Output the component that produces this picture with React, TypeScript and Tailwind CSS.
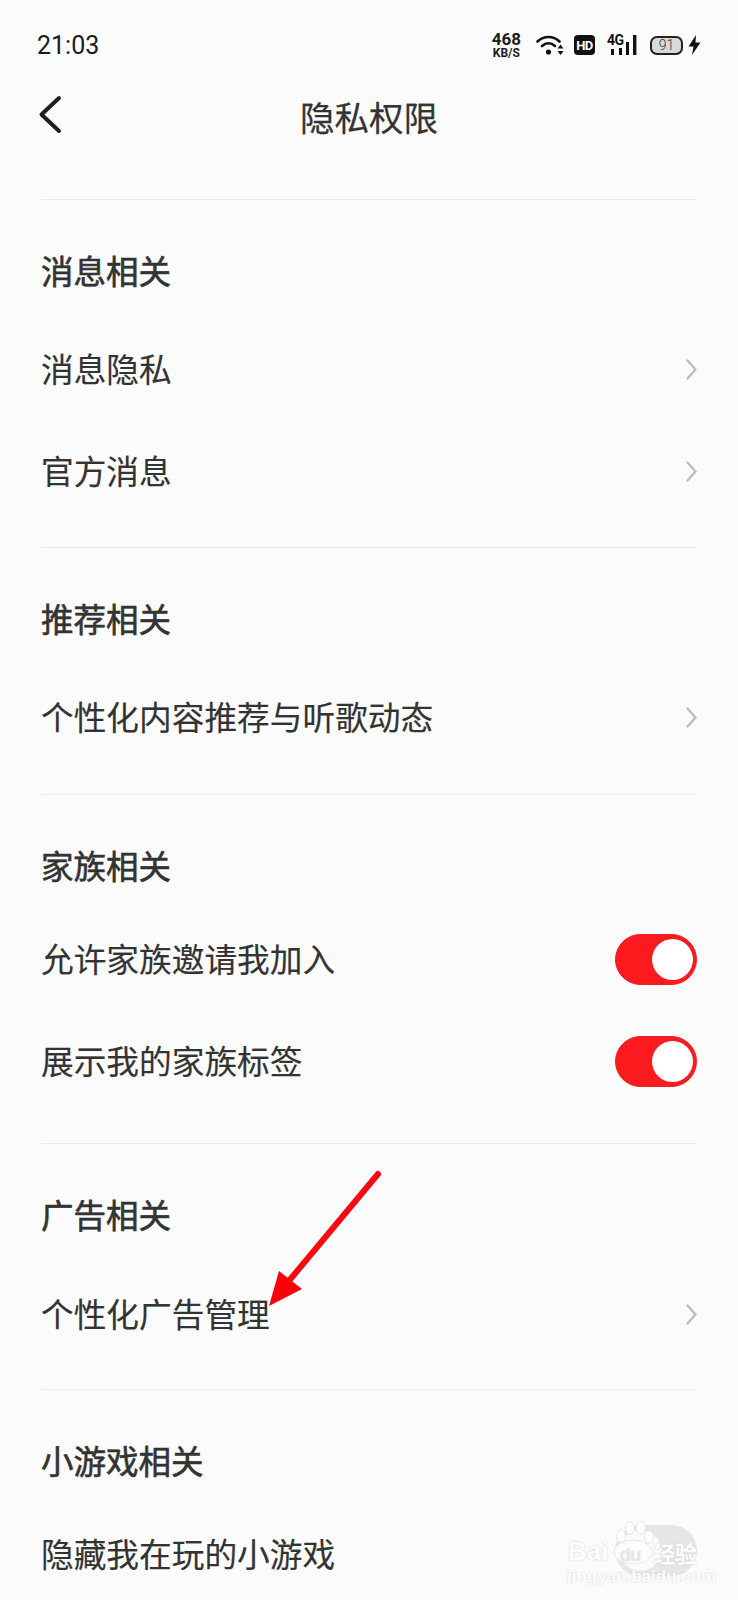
const cjk = "font-['Noto_Sans_CJK_SC','Noto_Sans',sans-serif]";

const Chevron = () => (
  <svg width="11" height="21" viewBox="0 0 11 21" fill="none">
    <path d="M1.5 1.5 L9.5 10.5 L1.5 19.5" stroke="#bdbdbd" strokeWidth="2.4" strokeLinecap="round" strokeLinejoin="round" />
  </svg>
);

const Toggle = ({ off }: { off?: boolean }) =>
  off ? (
    <div className="mb-[3px] flex h-[51px] w-[82px] items-center justify-start rounded-full bg-[#e6e6e6] pl-[5px]">
      <div className="h-[41px] w-[41px] rounded-full bg-[#fbfbfb]" />
    </div>
  ) : (
    <div className="flex h-[51px] w-[82px] items-center justify-end rounded-full border-[1.5px] border-[#e8211f] bg-[#fb1b1f] pr-[3.5px]">
      <div className="h-[41px] w-[41px] rounded-full bg-white" />
    </div>
  );

const Row = ({ label, toggle, off }: { label: string; toggle?: boolean; off?: boolean }) => (
  <div className="flex h-[102px] items-center justify-between">
    <p className={`${off ? "pt-[1px]" : "pb-[3px]"} text-[32.7px] leading-[40px] text-[#333333] [-webkit-text-stroke:0.15px_#333333]`}>{label}</p>
    {toggle ? <Toggle off={off} /> : <Chevron />}
  </div>
);

const Section = ({
  title,
  rows,
  toggle,
  off,
  gapClass,
  endClass,
}: {
  title: string;
  rows: string[];
  toggle?: boolean;
  off?: boolean;
  gapClass: string;
  endClass: string;
}) => (
  <section className={`border-t border-[#e9e9e9] pt-[50px] ${endClass}`}>
    <h2 className={`text-[32.5px] leading-[40px] text-[#333333] [-webkit-text-stroke:0.6px_#333333] ${gapClass}`}>{title}</h2>
    {rows.map((label) => (
      <Row key={label} label={label} toggle={toggle} off={off} />
    ))}
  </section>
);

const StatusBar = () => (
  <div className="flex h-[90px] items-center justify-between pl-[37px] pr-[37px]">
    <span className="font-['Roboto',sans-serif] text-[25px] leading-none text-[#1c1c1c]">21:03</span>
    <div className="flex items-center">
      <div className="flex flex-col items-center font-['Roboto',sans-serif] font-bold text-[#1c1c1c]">
        <span className="text-[17px] leading-[15px]">468</span>
        <span className="mt-[1px] text-[12px] leading-[11px]">KB/S</span>
      </div>
      <svg className="ml-[15px]" width="28" height="20" viewBox="0 0 28 20" fill="none">
        <path d="M1.5 6.5 C8 0.5 17 0.5 23.5 6.5" stroke="#111" strokeWidth="2.6" strokeLinecap="round" />
        <path d="M6 11 C10 7.5 15 7.5 19 11" stroke="#111" strokeWidth="2.6" strokeLinecap="round" />
        <circle cx="12.5" cy="17" r="2.6" fill="#111" />
        <path d="M24.5 9.5 L27.5 13.5 H21.5 Z M24.5 20 L27.5 16 H21.5 Z" fill="#111" />
      </svg>
      <div className="ml-[10px] flex h-[20px] w-[21px] items-center justify-center rounded-[4px] bg-[#111111] font-['Roboto',sans-serif] text-[13px] font-bold leading-none tracking-[-0.5px] text-white">
        HD
      </div>
      <div className="relative ml-[12px] h-[20px] w-[30px]">
        <span className="absolute left-0 top-[-2px] font-['Roboto',sans-serif] text-[14px] font-bold leading-[14px] tracking-[-0.5px] text-[#111111]">4G</span>
        <svg className="absolute inset-0" width="30" height="20" viewBox="0 0 30 20">
          <rect x="4" y="14" width="3" height="6" fill="#111" />
          <rect x="12" y="13" width="3" height="7" fill="#111" />
          <rect x="19" y="7" width="3" height="13" fill="#111" />
          <rect x="26" y="0" width="3.4" height="20" fill="#111" />
        </svg>
      </div>
      <div className="ml-[13px] flex h-[19px] w-[33px] items-center justify-center rounded-[7px] border-2 border-[#222222] bg-[#d9d9d9] font-['Roboto',sans-serif] text-[14px] font-light leading-none text-[#333333]">
        91
      </div>
      <svg className="ml-[5px]" width="13" height="20" viewBox="0 0 13 20">
        <path d="M8 0 L0.5 11.5 H5.5 L4 20 L12.5 7.5 H7.5 Z" fill="#111" />
      </svg>
    </div>
  </div>
);

const NavBar = () => (
  <div className="relative mb-[55px] flex h-[54px] items-center justify-center">
    <svg className="absolute left-[38px] top-[5px]" width="24" height="40" viewBox="0 0 24 40" fill="none">
      <path d="M21 3 L3.5 19.5 L21 36" stroke="#1f1f1f" strokeWidth="4" strokeLinecap="round" strokeLinejoin="round" />
    </svg>
    <h1 className="pb-[3px] text-[34.5px] leading-[44px] text-[#333333] [-webkit-text-stroke:0.25px_#333333]">隐私权限</h1>
  </div>
);

const Watermark = () => (
  <div className="absolute left-[565px] top-[1520px] h-[70px] w-[140px] select-none [text-shadow:0_0_2px_#cfcfcf]">
    <span className="absolute left-[3px] top-[16px] font-['Liberation_Sans',sans-serif] text-[26px] font-bold leading-[30px] text-[#fdfdfd]">Bai</span>
    <svg className="absolute left-[48px] top-[0px]" width="42" height="46" viewBox="0 0 42 46" fill="#fdfdfd" stroke="#e0e0e0" strokeWidth="0.8">
      <ellipse cx="8" cy="16" rx="4.5" ry="6.5" />
      <ellipse cx="17" cy="8" rx="4.5" ry="6.5" />
      <ellipse cx="28" cy="8" rx="4.5" ry="6.5" />
      <ellipse cx="36" cy="17" rx="4.5" ry="6.5" />
      <ellipse cx="20" cy="32" rx="19" ry="12" />
    </svg>
    <span className="absolute left-[55px] top-[24px] font-['Liberation_Sans',sans-serif] text-[19px] leading-[22px] text-[#e8e8e8]">du</span>
    <span className={`absolute left-[88px] top-[19px] ${cjk} text-[22px] font-bold leading-[26px] text-[#fdfdfd]`}>经验</span>
    <span className="absolute left-[2px] top-[47px] font-['Liberation_Sans',sans-serif] text-[17px] font-bold leading-[20px] text-[#fdfdfd]">jingyan.baidu.com</span>
  </div>
);

const RedArrow = () => (
  <svg className="absolute left-[260px] top-[1165px]" width="125" height="150" viewBox="260 1165 125 150" fill="none">
    <path d="M378 1174 L288 1282" stroke="#f80a10" strokeWidth="6" strokeLinecap="round" />
    <path d="M269 1306 L279 1271 L302 1289 Z" fill="#fb0006" />
  </svg>
);

export default function App() {
  return (
    <div className={`relative h-[1600px] overflow-hidden bg-[#fbfbfb] ${cjk}`}>
      <StatusBar />
      <NavBar />
      <div className="px-[41px]">
        <Section title="消息相关" rows={["消息隐私", "官方消息"]} gapClass="mb-[28px]" endClass="pb-[25px]" />
        <Section title="推荐相关" rows={["个性化内容推荐与听歌动态"]} gapClass="mb-[28px]" endClass="pb-[26px]" />
        <Section title="家族相关" rows={["允许家族邀请我加入", "展示我的家族标签"]} toggle gapClass="mb-[23px]" endClass="pb-[31px]" />
        <Section title="广告相关" rows={["个性化广告管理"]} gapClass="mb-[29px]" endClass="pb-[24px]" />
        <Section title="小游戏相关" rows={["隐藏我在玩的小游戏"]} toggle off gapClass="mb-[21px]" endClass="pb-0" />
      </div>
      <RedArrow />
      <Watermark />
    </div>
  );
}
